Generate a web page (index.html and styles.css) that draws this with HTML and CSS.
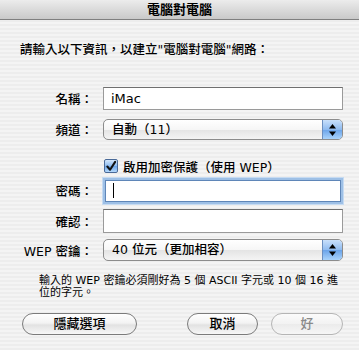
FILE: index.html
```html
<!DOCTYPE html>
<html lang="zh-Hant">
<head>
  <meta charset="UTF-8" />
  <title>電腦對電腦</title>
  <link rel="stylesheet" href="styles.css">
</head>
<body>
  <div class="titlebar">電腦對電腦</div>

  <div class="sheet">
    <p class="intro">請輸入以下資訊，以建立"電腦對電腦"網路：</p>

    <div class="form">
      <div class="row row-name">
        <label class="label">名稱：</label>
        <div class="field">iMac</div>
      </div>

      <div class="row row-channel">
        <label class="label">頻道：</label>
        <div class="popup">
          <span class="popup-text">自動（11）</span>
          <span class="popup-arrows">
            <svg width="9" height="14" viewBox="0 0 9 14">
              <path d="M4.5 1 L8 5.5 L1 5.5 Z" fill="#000"/>
              <path d="M4.5 13 L8 8.5 L1 8.5 Z" fill="#000"/>
            </svg>
          </span>
        </div>
      </div>

      <div class="row row-check">
        <span class="label"></span>
        <div class="check-wrap">
          <span class="checkbox">
            <svg width="13" height="13" viewBox="0 0 13 13">
              <path d="M2.5 6.5 L5.5 10 L11 1.5" stroke="#111" stroke-width="2.2" fill="none" stroke-linecap="round" stroke-linejoin="round"/>
            </svg>
          </span>
          <span>啟用加密保護（使用 WEP）</span>
        </div>
      </div>

      <div class="row row-pass">
        <label class="label">密碼：</label>
        <div class="field focused"><span class="caret"></span></div>
      </div>

      <div class="row row-confirm">
        <label class="label">確認：</label>
        <div class="field"></div>
      </div>

      <div class="row row-wep">
        <label class="label">WEP 密鑰：</label>
        <div class="popup">
          <span class="popup-text">40 位元（更加相容）</span>
          <span class="popup-arrows">
            <svg width="9" height="14" viewBox="0 0 9 14">
              <path d="M4.5 1 L8 5.5 L1 5.5 Z" fill="#000"/>
              <path d="M4.5 13 L8 8.5 L1 8.5 Z" fill="#000"/>
            </svg>
          </span>
        </div>
      </div>
    </div>

    <p class="help">輸入的 WEP 密鑰必須剛好為 5 個 ASCII 字元或 10 個 16 進位的字元。</p>

    <div class="buttons">
      <button class="btn btn-options">隱藏選項</button>
      <div class="btn-group">
        <button class="btn btn-cancel">取消</button>
        <button class="btn btn-ok" disabled>好</button>
      </div>
    </div>
  </div>
</body>
</html>
```

FILE: styles.css
```css
* {
  box-sizing: border-box;
}

body, html {
  margin: 0;
  width: 359px;
  height: 350px;
  overflow: hidden;
  font-family: "DejaVu Sans", "Noto Sans CJK TC", sans-serif;
  font-size: 12px;
  color: #000;
  background: repeating-linear-gradient(to bottom, #ededed 0, #ededed 2px, #f4f4f4 2px, #f4f4f4 4px);
}

.titlebar {
  height: 20px;
  line-height: 19px;
  text-align: center;
  font-weight: bold;
  font-size: 13px;
  background: linear-gradient(to bottom, #ececec, #c9c9c9);
  border-bottom: 1px solid #7f7f7f;
}

.sheet {
  padding: 21px 16px 0 20px;
}

.intro {
  margin: 0;
  height: 18px;
  line-height: 18px;
  font-size: 12.5px;
  font-weight: 500;
}

.form {
  margin-top: 28px;
  display: flex;
  flex-direction: column;
}

.row {
  display: flex;
  align-items: center;
}

.label {
  width: 73px;
  margin-right: 10px;
  text-align: right;
  font-size: 12.5px;
  font-weight: 500;
}

.row-name { height: 23px; }
.row-channel { height: 21px; margin-top: 9px; }
.row-check { height: 18px; margin-top: 17px; }
.row-pass { height: 25px; margin-top: 3px; }
.row-confirm { height: 24px; margin-top: 6px; }
.row-wep { height: 22px; margin-top: 6px; }

.field {
  width: 240px;
  height: 100%;
  background: #fff;
  border: 1px solid #9a9a9a;
  border-top-color: #6f6f6f;
  padding: 0 7px;
  line-height: 21px;
  font-size: 13px;
}

.field.focused {
  height: 22px;
  margin: 0 2px;
  width: 236px;
  border-color: #5f86b8;
  box-shadow: 0 0 0 2px #9ec0e6, 0 0 0 3px #c6dbf2;
  display: flex;
  align-items: center;
}

.caret {
  display: inline-block;
  width: 1px;
  height: 15px;
  background: #000;
}

.popup {
  width: 240px;
  height: 100%;
  display: flex;
  border: 1px solid #8c8c8c;
  border-radius: 5px;
  overflow: hidden;
  background: linear-gradient(to bottom, #ffffff 0%, #f6f6f6 50%, #e4e4e4 51%, #f4f4f4 100%);
}

.popup-text {
  flex: 1;
  padding-left: 8px;
  line-height: 20px;
  font-size: 12.5px;
  font-weight: 500;
}

.popup-arrows {
  width: 20px;
  display: flex;
  align-items: center;
  justify-content: center;
  border-left: 1px solid #6c8fc0;
  background: linear-gradient(to bottom, #c9e0fb 0%, #8fbbf0 50%, #6aa3e9 51%, #a9d3fb 100%);
}

.check-wrap {
  display: flex;
  align-items: center;
  gap: 5px;
  font-size: 12.5px;
  font-weight: 500;
  margin-left: 1px;
}

.checkbox {
  width: 14px;
  height: 14px;
  border: 1px solid #4a6a98;
  border-radius: 2px;
  background: linear-gradient(to bottom, #d3e6fb 0%, #8dbbef 50%, #6aa3e8 51%, #b5d9fb 100%);
  display: flex;
  align-items: center;
  justify-content: center;
}

.help {
  margin: 14px 0 0 19px;
  width: 306px;
  font-size: 11px;
  line-height: 12px;
}

.buttons {
  margin-top: 14px;
  padding-left: 2px;
  display: flex;
  justify-content: space-between;
}

.btn-group {
  display: flex;
  gap: 13px;
}

.btn {
  height: 22px;
  border: 1px solid #7b7b7b;
  border-radius: 11px;
  background: linear-gradient(to bottom, #ffffff 0%, #f3f3f3 45%, #e2e2e2 55%, #f7f7f7 100%);
  font-family: "DejaVu Sans", "Noto Sans CJK TC", sans-serif;
  font-size: 13px;
  font-weight: 500;
  color: #000;
  padding: 0;
  line-height: 20px;
}

.btn-options { width: 115px; }
.btn-cancel { width: 71px; }

.btn-ok {
  width: 72px;
  color: #8a8a8a;
  border-color: #b5b5b5;
  background: linear-gradient(to bottom, #fbfbfb 0%, #f2f2f2 50%, #ebebeb 51%, #f6f6f6 100%);
}
```
